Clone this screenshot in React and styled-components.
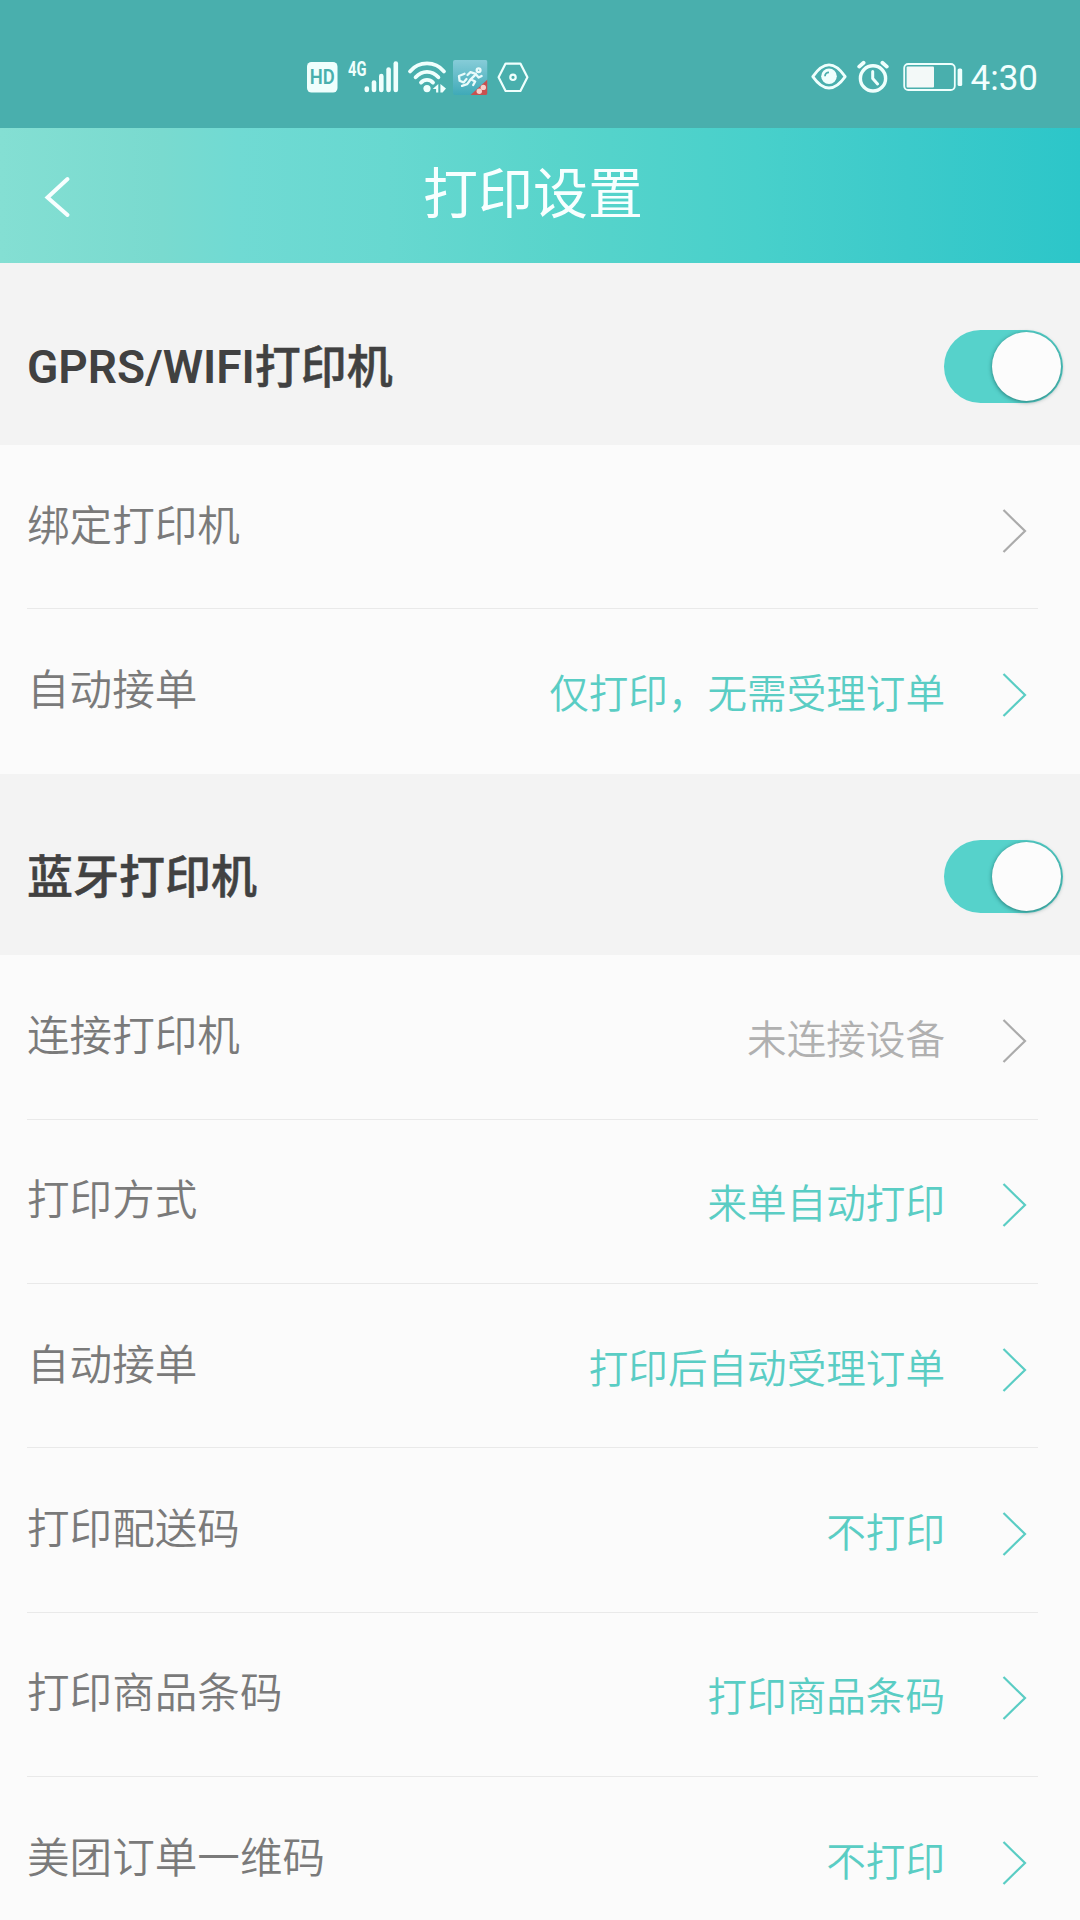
import styled, { createGlobalStyle } from "styled-components";
import React from "react";

const GlobalStyle = createGlobalStyle`
  body {
    margin: 0;
    background: #fbfbfb;
    font-family: Roboto, "Noto Sans CJK SC", sans-serif;
  }
`;

const Page = styled.div`
  width: 1080px;
  height: 1920px;
  overflow: hidden;
  background-color: #fbfbfb;
`;

const StatusBar = styled.div`
  display: flex;
  justify-content: space-between;
  box-sizing: border-box;
  height: 128px;
  padding: 59px 42px 0 306px;
  background-color: #49afad;
`;

const StatusGroup = styled.div`
  display: flex;
  align-items: flex-start;
  height: 36px;
`;

const StatusItem = styled.div`
  display: flex;
  margin-left: ${(props) => props.$space || 0}px;
`;

const NetworkType = styled.span`
  width: 16px;
  color: #effffd;
  font-size: 21px;
  font-weight: 700;
  line-height: 20px;
  transform: scaleX(0.7);
  transform-origin: left;
`;

const Time = styled.span`
  color: #f2fffe;
  font-size: 35px;
  line-height: 39px;
`;

const Header = styled.header`
  display: grid;
  grid-template-columns: 160px 1fr 160px;
  align-items: center;
  height: 135px;
  background: linear-gradient(
    90deg,
    #84dfd3 0%,
    #79dacf 15%,
    #70dad3 22%,
    #67d8d0 36%,
    #58d4cb 52%,
    #48d0cb 70%,
    #3ccaca 84%,
    #2cc6c9 100%
  );
`;

const BackButton = styled.button`
  display: flex;
  width: 110px;
  padding: 2px 0 0 42px;
  background: none;
  border: none;
  cursor: pointer;
`;

const Title = styled.h1`
  margin: 0;
  padding: 0 14px 4px 0;
  color: #f8ffff;
  font-size: 55px;
  font-weight: 400;
  line-height: 70px;
  text-align: center;
`;

const SectionHead = styled.div`
  display: flex;
  justify-content: space-between;
  align-items: center;
  box-sizing: border-box;
  height: ${(props) => props.$height}px;
  padding: 25px 17px 0 27px;
  background-color: #f3f3f3;
`;

const SectionTitle = styled.h2`
  margin: 0;
  padding-top: 1px;
  color: #414141;
  font-size: 46px;
  font-weight: 500;
  line-height: 60px;
  -webkit-text-stroke: 0.5px #414141;
`;

const Latin = styled.span`
  font-weight: 600;
  -webkit-text-stroke: 0;
`;

const Switch = styled.button`
  display: flex;
  justify-content: flex-end;
  align-items: center;
  box-sizing: border-box;
  width: 119px;
  height: 73px;
  padding: 0 2px;
  background-color: #56d2cb;
  border: none;
  border-radius: 37px;
  cursor: pointer;
`;

const Knob = styled.span`
  width: 69px;
  height: 69px;
  background-color: #fcfcfc;
  border-radius: 50%;
  box-shadow: 0 1px 4px rgba(0, 60, 60, 0.6);
`;

const List = styled.div`
  padding: 0 42px 0 27px;
`;

const Row = styled.div`
  display: flex;
  align-items: center;
  box-sizing: border-box;
  height: 164.4px;
  padding-right: 11px;
  border-bottom: 1px solid #e9e9e9;

  &:last-child {
    border-bottom-color: transparent;
  }
`;

const Label = styled.span`
  flex: 1;
  padding-bottom: 2px;
  color: #7a7a7a;
  font-size: 42.6px;
  font-weight: 350;
  line-height: 60px;
`;

const Value = styled.span`
  margin-right: 57px;
  padding-top: 8px;
  color: ${(props) => (props.$muted ? "#b0b0b0" : "#5acdc4")};
  font-size: 39.6px;
  font-weight: 350;
  line-height: 56px;
`;

const Arrow = styled.svg`
  width: 25px;
  height: 46px;
  margin-top: 8px;
  fill: none;
  stroke: ${(props) => (props.$muted ? "#ababab" : "#5acdc4")};
  stroke-width: 2.2;
`;

const white = "#effffd";

function HdIcon() {
  return (
    <svg width="32" height="36" viewBox="0 0 32 36">
      <rect x="1" y="3" width="30.5" height="30.5" rx="4.5" fill={white} />
      <text
        x="3.8"
        y="25.4"
        fontSize="20.5"
        fontWeight="600"
        textLength="25"
        lengthAdjust="spacingAndGlyphs"
        fill="#49afad"
      >
        HD
      </text>
    </svg>
  );
}

function SignalIcon() {
  return (
    <svg width="35" height="36" viewBox="0 0 35 36">
      <g stroke={white} strokeWidth="4.6" strokeLinecap="round">
        <path d="M2.8 29.6V31" />
        <path d="M10 23.6V31" />
        <path d="M17.3 17V31" />
        <path d="M24.6 10.5V31" />
        <path d="M31.8 4.5V31" />
      </g>
    </svg>
  );
}

function WifiIcon() {
  return (
    <svg width="40" height="36" viewBox="0 0 40 36">
      <g fill="none" stroke={white} strokeWidth="3.8" strokeLinecap="round">
        <path d="M3 12.4C12 1.8 28 1.8 37 12.4" />
        <path d="M8.6 18.3C15 11 25 11 31.4 18.3" />
        <path d="M14 23.6C17.4 20 22.6 20 26 23.6" />
      </g>
      <circle cx="20" cy="29.6" r="3.6" fill={white} />
      <path d="M31.3 25v8.5h-2.2v-3.6h-3.4zM33.4 25l5.6 4.6-3.4 3.9h-2.2z" fill={white} />
    </svg>
  );
}

function CourierIcon() {
  return (
    <svg width="35" height="37" viewBox="0 0 35 37">
      <defs>
        <linearGradient id="tile" x1="0" y1="0" x2="0" y2="1">
          <stop offset="0" stopColor="#86ccd8" />
          <stop offset="1" stopColor="#3faab8" />
        </linearGradient>
        <clipPath id="tileClip">
          <rect y="1" width="34.5" height="35" rx="2" />
        </clipPath>
      </defs>
      <g clipPath="url(#tileClip)">
        <rect y="1" width="34.5" height="35" fill="url(#tile)" />
        <g fill="none" stroke="#e9fbfb" strokeWidth="2.3" strokeLinecap="round" strokeLinejoin="round">
          <circle cx="25.6" cy="11.2" r="1.9" />
          <path d="M22.8 14.8L17.5 13.2L14.5 16" />
          <path d="M22.3 15.8L17.6 20.3L22.2 22.5L20.2 26" />
          <path d="M17.2 21L14.2 25.2L9 26.8" />
          <path d="M23.3 15.8L25.6 18.6L28.6 17" />
          <path d="M11.5 14.8L6 17L6.6 21.8L10.5 23.4L13.5 20" />
        </g>
        <path d="M34.5 20.5V36H17.5z" fill="#c8504f" />
        <g fill="#f6d0cc">
          <circle cx="30.3" cy="28.4" r="2.7" />
          <circle cx="26.3" cy="32.2" r="2.7" />
        </g>
      </g>
    </svg>
  );
}

function HexIcon() {
  return (
    <svg width="32" height="36" viewBox="0 0 32 36" fill="none" stroke={white}>
      <path d="M8.6 4.6h14.8L30.4 18.3L23.4 32H8.6L1.6 18.3z" strokeWidth="2.2" strokeLinejoin="round" />
      <circle cx="16" cy="18.3" r="2.7" strokeWidth="2.2" />
    </svg>
  );
}

function EyeIcon() {
  return (
    <svg width="36" height="36" viewBox="0 0 36 36">
      <path
        d="M1.8 17.6C8 8.6 13 5.9 18 5.9S28 8.6 34.2 17.6C28 26.4 23 29 18 29S8 26.4 1.8 17.6z"
        fill="none"
        stroke={white}
        strokeWidth="2.8"
        strokeLinejoin="round"
      />
      <circle cx="18" cy="17.3" r="7.8" fill={white} />
      <path d="M14 17.3a4 4 0 0 1 4-4" fill="none" stroke="#49afad" strokeWidth="1.8" />
    </svg>
  );
}

function AlarmIcon() {
  return (
    <svg width="32" height="36" viewBox="0 0 32 36" fill="none" stroke={white} strokeLinecap="round">
      <circle cx="16" cy="19.4" r="12.6" strokeWidth="3.4" />
      <path d="M2.2 7.6L6.6 3.8M29.8 7.6L25.4 3.8" strokeWidth="3.8" />
      <path d="M15.7 12.4V19.6L20.6 25" strokeWidth="3" strokeLinejoin="round" />
    </svg>
  );
}

function BatteryIcon() {
  return (
    <svg width="60" height="36" viewBox="0 0 60 36">
      <rect x="1.2" y="5" width="50.6" height="26" rx="4" fill="none" stroke={white} strokeWidth="1.8" />
      <rect x="3.6" y="7.6" width="27.4" height="20.8" rx="1" fill="#f3f9f8" />
      <rect x="54.6" y="9.4" width="4.6" height="17.6" rx="1.6" fill={white} />
    </svg>
  );
}

const gprsRows = [
  { label: "绑定打印机", value: "", muted: true },
  { label: "自动接单", value: "仅打印，无需受理订单" },
];

const bluetoothRows = [
  { label: "连接打印机", value: "未连接设备", muted: true },
  { label: "打印方式", value: "来单自动打印" },
  { label: "自动接单", value: "打印后自动受理订单" },
  { label: "打印配送码", value: "不打印" },
  { label: "打印商品条码", value: "打印商品条码" },
  { label: "美团订单一维码", value: "不打印" },
];

function SettingSection({ title, rows, height }) {
  return (
    <section>
      <SectionHead $height={height}>
        <SectionTitle>{title}</SectionTitle>
        <Switch type="button" role="switch" aria-checked="true">
          <Knob />
        </Switch>
      </SectionHead>
      <List>
        {rows.map((row) => (
          <Row key={row.label}>
            <Label>{row.label}</Label>
            <Value $muted={row.muted}>{row.value}</Value>
            <Arrow $muted={row.muted} viewBox="0 0 25 46">
              <path d="M1.5 2L23 23L1.5 44" />
            </Arrow>
          </Row>
        ))}
      </List>
    </section>
  );
}

export default function App() {
  return (
    <Page>
      <GlobalStyle />
      <StatusBar>
        <StatusGroup>
          <StatusItem>
            <HdIcon />
          </StatusItem>
          <StatusItem $space={10}>
            <NetworkType>4G</NetworkType>
            <SignalIcon />
          </StatusItem>
          <StatusItem $space={8}>
            <WifiIcon />
          </StatusItem>
          <StatusItem $space={6}>
            <CourierIcon />
          </StatusItem>
          <StatusItem $space={9}>
            <HexIcon />
          </StatusItem>
        </StatusGroup>
        <StatusGroup>
          <StatusItem>
            <EyeIcon />
          </StatusItem>
          <StatusItem $space={10}>
            <AlarmIcon />
          </StatusItem>
          <StatusItem $space={14}>
            <BatteryIcon />
          </StatusItem>
          <StatusItem $space={8}>
            <Time>4:30</Time>
          </StatusItem>
        </StatusGroup>
      </StatusBar>
      <Header>
        <BackButton type="button" aria-label="返回">
          <svg width="30" height="42" viewBox="0 0 30 42">
            <path
              d="M25.5 3L5.5 21.5L25.5 39"
              fill="none"
              stroke="#f8ffff"
              strokeWidth="4"
              strokeLinecap="round"
            />
          </svg>
        </BackButton>
        <Title>打印设置</Title>
      </Header>
      <SettingSection
        title={
          <>
            <Latin>GPRS/WIFI</Latin>打印机
          </>
        }
        rows={gprsRows}
        height={182}
      />
      <SettingSection title="蓝牙打印机" rows={bluetoothRows} height={181.4} />
    </Page>
  );
}
